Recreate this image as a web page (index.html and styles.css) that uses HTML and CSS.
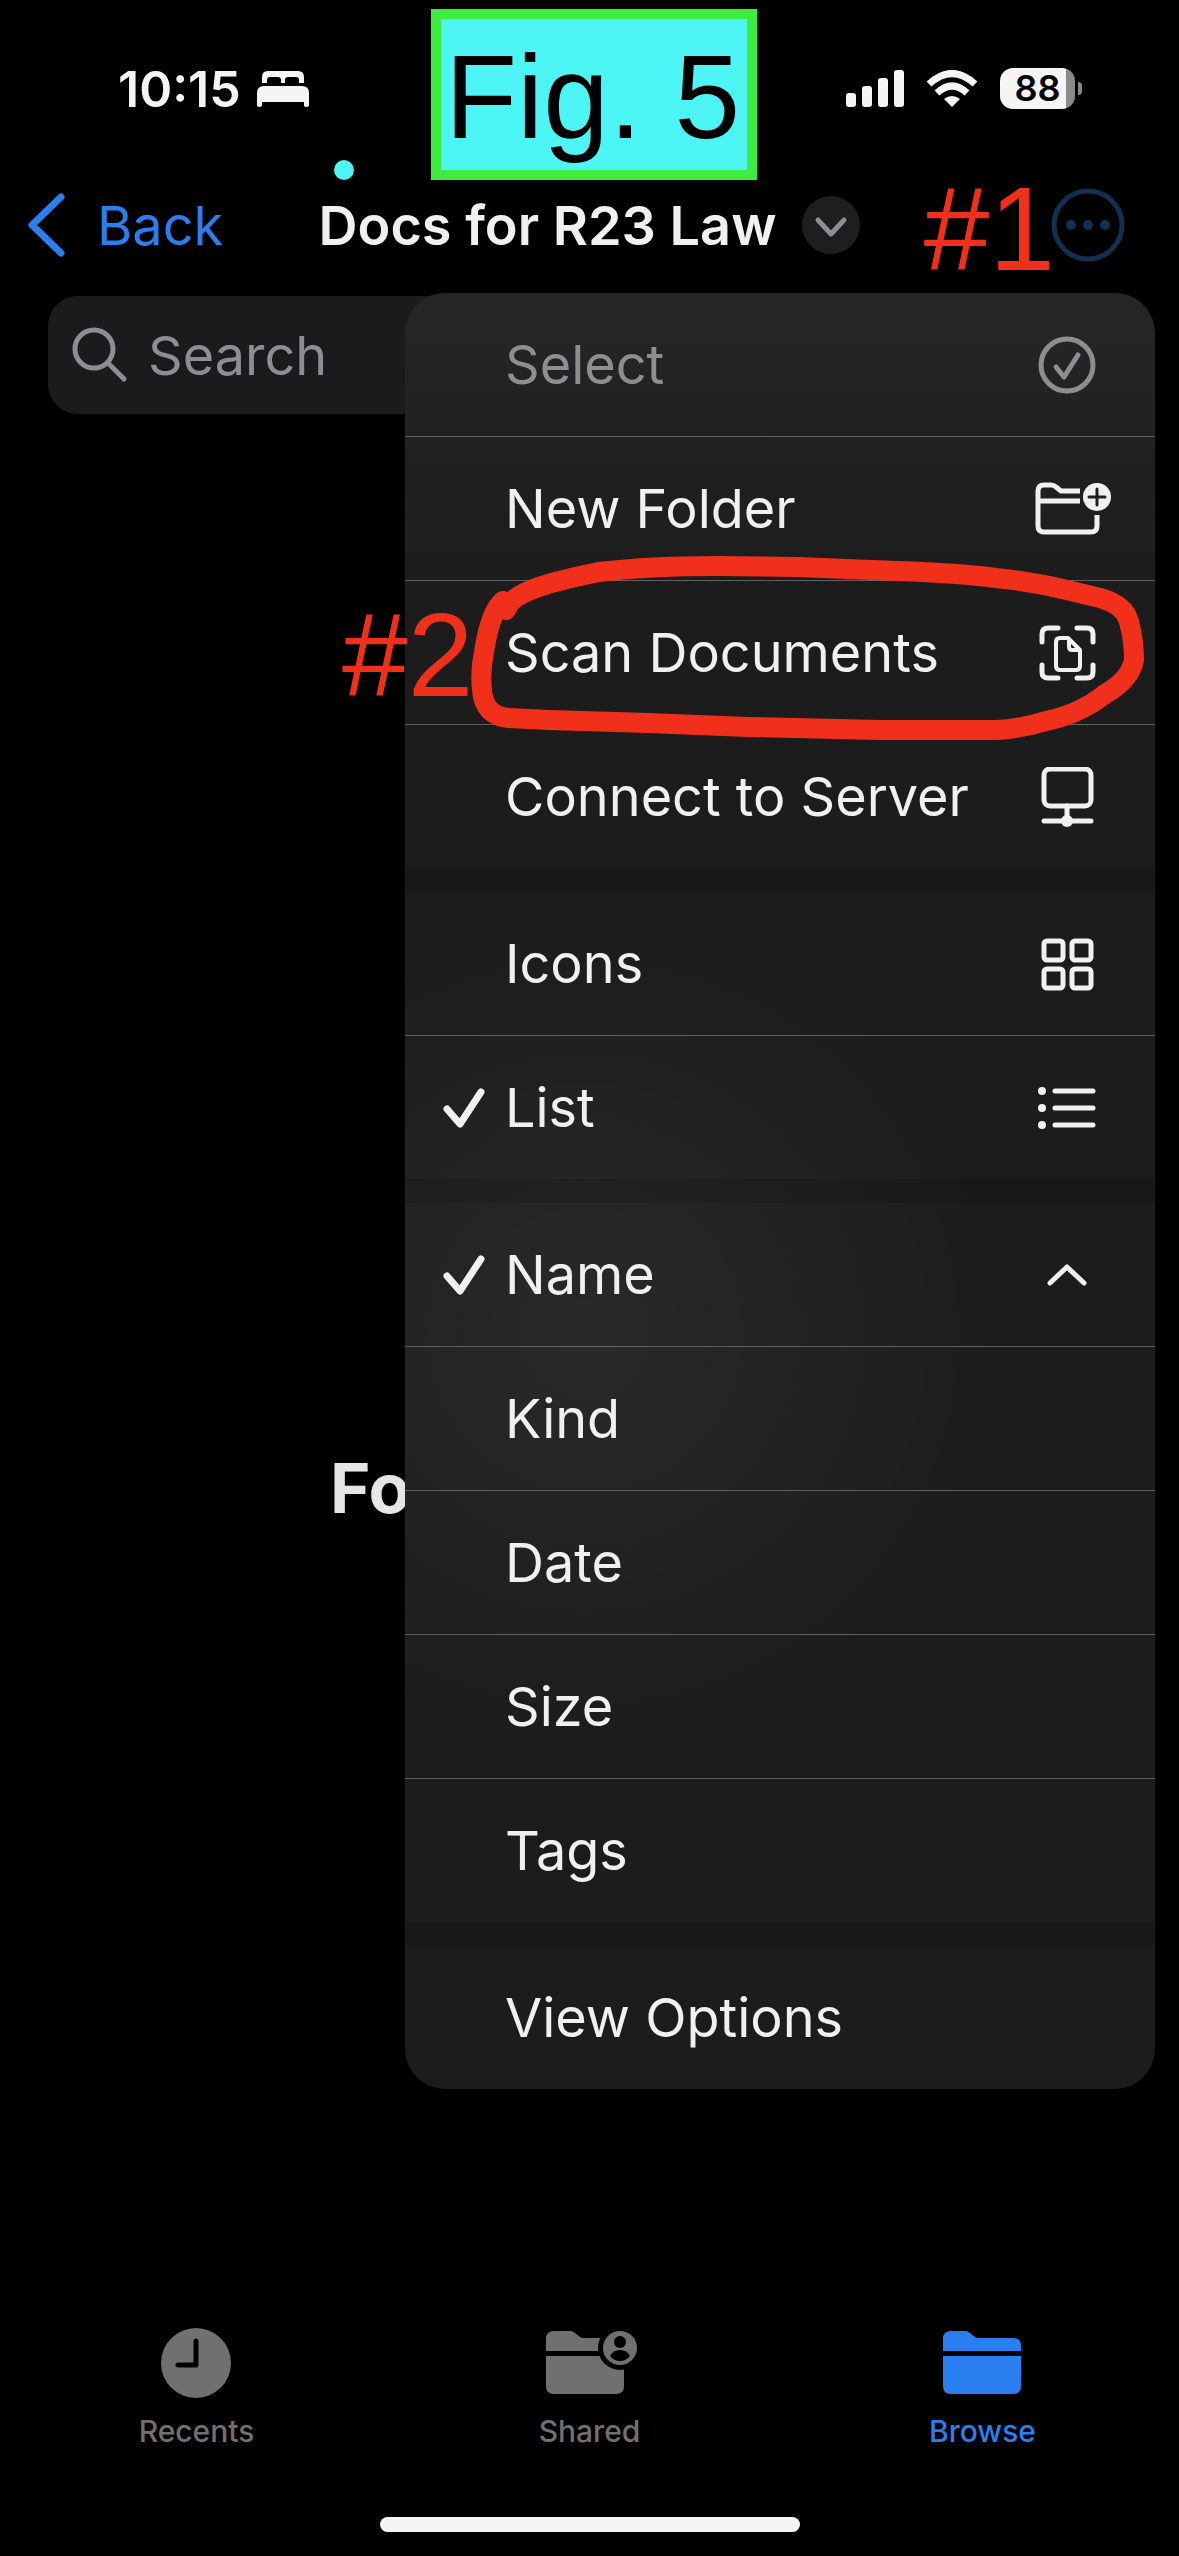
FILE: index.html
```html
<!DOCTYPE html>
<html lang="en">
<head>
    <meta charset="UTF-8">
    <meta name="viewport" content="width=device-width, initial-scale=1.0">
    <title>Docs for R23 Law</title>
    <link rel="stylesheet" href="styles.css">
</head>
<body>
    <header class="status-bar">
        <div class="status-left">
            <span>10:15</span>
            <svg width="52" height="36" viewBox="0 0 52 36" fill="currentColor">
                <path d="M5 12V6q0-6 6-6h30q6 0 6 6v6h-5V9q0-3-3-3H31q-3 0-3 3v3h-4V9q0-3-3-3h-8q-3 0-3 3v3z"/>
                <path d="M0 35V22q0-7 7-7h38q7 0 7 7v13q-3 2-5 0v-4H5v4q-3 2-5 0z"/>
            </svg>
        </div>
        <div class="status-right">
            <svg width="58" height="38" viewBox="0 0 58 38" fill="currentColor">
                <rect x="0" y="23" width="10" height="14" rx="3"/>
                <rect x="16" y="16" width="10" height="21" rx="3"/>
                <rect x="32" y="8" width="10" height="29" rx="3"/>
                <rect x="48" y="0" width="10" height="37" rx="3"/>
            </svg>
            <svg width="52" height="38" viewBox="0 0 52 38" fill="none" stroke="currentColor" stroke-width="7">
                <path d="M3 14Q26-7 49 14"/>
                <path d="M11 23Q26 9 41 23"/>
                <path d="M26 37l-8-8q8-6 16 0z" fill="currentColor" stroke="none"/>
            </svg>
            <div class="battery"><span>88</span></div>
        </div>
        <div class="figure-label">Fig. 5</div>
        <span class="dot"></span>
    </header>

    <nav class="nav-bar">
        <a href="#" class="back">
            <svg width="40" height="64" viewBox="0 0 40 64"><path d="M34 4L5 32l29 28"/></svg>
            Back
        </a>
        <button type="button" class="title">
            Docs for R23 Law
            <svg width="58" height="58" viewBox="0 0 58 58">
                <circle cx="29" cy="29" r="29"/>
                <path d="M16 24l13 14 13-14"/>
            </svg>
        </button>
        <button type="button" class="more" aria-label="More">
            <svg width="74" height="74" viewBox="0 0 74 74">
                <circle cx="37" cy="37" r="34" fill="none" stroke="currentColor" stroke-width="5"/>
                <g fill="currentColor">
                    <circle cx="20" cy="37" r="5"/>
                    <circle cx="37" cy="37" r="5"/>
                    <circle cx="54" cy="37" r="5"/>
                </g>
            </svg>
        </button>
        <span class="note note-1">#1</span>
    </nav>

    <main>
        <label class="search">
            <svg width="56" height="56" viewBox="0 0 56 56">
                <circle cx="22" cy="22" r="19"/>
                <path d="M36 36l16 16"/>
            </svg>
            <input type="search" placeholder="Search" aria-label="Search">
        </label>

        <h1 class="empty">Folder is Empty</h1>

        <div class="menu">
            <div class="menu-section">
                <button type="button" class="item" disabled>
                    <span class="check"></span>
                    <span class="name">Select</span>
                    <svg class="icon" viewBox="0 0 90 60">
                        <circle cx="45" cy="30" r="26"/>
                        <path d="M34 32l8 10 14-22"/>
                    </svg>
                </button>
                <button type="button" class="item">
                    <span class="check"></span>
                    <span class="name">New Folder</span>
                    <svg class="icon" viewBox="0 0 90 60">
                        <path d="M58 12H39l-5-4q-2-2-5-2h-7q-6 0-6 6v35q0 6 6 6h47q6 0 6-6V36M16 22h42" stroke-linecap="butt"/>
                        <circle cx="75" cy="18" r="14" fill="currentColor" stroke="none"/>
                        <path d="M67 18h16M75 10v16" stroke="#1f1f20" stroke-width="3"/>
                    </svg>
                </button>
                <button type="button" class="item">
                    <span class="check"></span>
                    <span class="name">Scan Documents</span>
                    <svg class="icon" viewBox="0 0 90 60">
                        <path d="M20 19v-8q0-6 6-6h10M55 5h10q6 0 6 6v8M71 42v7q0 6-6 6H55M36 55H26q-6 0-6-6v-7"/>
                        <path d="M38 15h8l12 12v16q0 4-4 4H38q-4 0-4-4V19q0-4 4-4zM47 16v8q0 3 3 3h8" stroke-width="4"/>
                    </svg>
                    <svg class="scribble" width="680" height="190" viewBox="470 550 680 190">
                        <path d="M506 610C512 590 560 580 599 572Q650 566 718 566L797 567 897 571Q960 573 996 578Q1035 582 1071 591L1100 598Q1125 605 1129 622Q1134 640 1134 660Q1130 680 1105 694Q1080 714 1046 721Q1020 729 996 730H880L748 727 648 723 549 720 509 718Q484 716 482 690Q480 670 484 652Q490 612 503 601"/>
                    </svg>
                    <span class="note note-2">#2</span>
                </button>
                <button type="button" class="item">
                    <span class="check"></span>
                    <span class="name">Connect to Server</span>
                    <svg class="icon" viewBox="0 0 90 60">
                        <rect x="22" y="2" width="47" height="37" rx="6"/>
                        <path d="M45 39v14M22 54h47"/>
                        <circle cx="45" cy="54" r="6" fill="currentColor" stroke="none"/>
                    </svg>
                </button>
            </div>

            <div class="menu-section">
                <button type="button" class="item">
                    <span class="check"></span>
                    <span class="name">Icons</span>
                    <svg class="icon" viewBox="0 0 90 60">
                        <rect x="22" y="7" width="19" height="19" rx="3"/>
                        <rect x="50" y="7" width="19" height="19" rx="3"/>
                        <rect x="22" y="35" width="19" height="19" rx="3"/>
                        <rect x="50" y="35" width="19" height="19" rx="3"/>
                    </svg>
                </button>
                <button type="button" class="item">
                    <span class="check">
                        <svg width="42" height="40" viewBox="0 0 42 40"><path d="M4 21l13 15L38 4"/></svg>
                    </span>
                    <span class="name">List</span>
                    <svg class="icon" viewBox="0 0 90 60">
                        <path d="M33 13h38M33 30h38M33 47h38"/>
                        <g fill="currentColor" stroke="none">
                            <circle cx="20" cy="13" r="4"/>
                            <circle cx="20" cy="30" r="4"/>
                            <circle cx="20" cy="47" r="4"/>
                        </g>
                    </svg>
                </button>
            </div>

            <div class="menu-section">
                <button type="button" class="item">
                    <span class="check">
                        <svg width="42" height="40" viewBox="0 0 42 40"><path d="M4 21l13 15L38 4"/></svg>
                    </span>
                    <span class="name">Name</span>
                    <svg class="icon" viewBox="0 0 90 60"><path d="M28 38l17-16 17 16"/></svg>
                </button>
                <button type="button" class="item"><span class="check"></span><span class="name">Kind</span></button>
                <button type="button" class="item"><span class="check"></span><span class="name">Date</span></button>
                <button type="button" class="item"><span class="check"></span><span class="name">Size</span></button>
                <button type="button" class="item"><span class="check"></span><span class="name">Tags</span></button>
            </div>

            <div class="menu-section">
                <button type="button" class="item"><span class="check"></span><span class="name">View Options</span></button>
            </div>
        </div>
    </main>

    <footer>
        <nav class="tabs">
            <a href="#" class="tab">
                <svg width="96" height="72" viewBox="0 0 96 72">
                    <circle cx="47" cy="36" r="35" fill="currentColor"/>
                    <path d="M47 14v24H29" fill="none" stroke="#000" stroke-width="5" stroke-linecap="round" stroke-linejoin="round"/>
                </svg>
                Recents
            </a>
            <a href="#" class="tab">
                <svg width="96" height="72" viewBox="0 0 96 72">
                    <path d="M4 24V12q0-8 8-8h16q3 0 5 2l5 4q1 1 4 1h32q8 0 8 8v5zM4 29h78v30q0 8-8 8H12q-8 0-8-8z" fill="currentColor"/>
                    <circle cx="78" cy="21" r="22" fill="#000"/>
                    <circle cx="78" cy="21" r="17" fill="currentColor"/>
                    <circle cx="78" cy="15" r="6" fill="#000"/>
                    <path d="M68 29q3-6 10-6t10 6q-4 5-10 5t-10-5z" fill="#000"/>
                </svg>
                Shared
            </a>
            <a href="#" class="tab active">
                <svg width="96" height="72" viewBox="0 0 96 72">
                    <path d="M8 24V12q0-8 8-8h14q3 0 5 2l5 4q1 1 4 1h34q8 0 8 8v5zM8 29h78v30q0 8-8 8H16q-8 0-8-8z" fill="currentColor"/>
                </svg>
                Browse
            </a>
        </nav>
        <div class="home-indicator"></div>
    </footer>
</body>
</html>
```
FILE: styles.css
```css
:root {
    --blue: #2a7ff0;
    --red: #f0301b;
    --text: #f0f0f0;
    --muted: #8e8e92;
    --tab-gray: #707070;
}

* {
    box-sizing: border-box;
}

body {
    margin: 0;
    min-height: 100vh;
    display: flex;
    flex-direction: column;
    background: #000;
    color: var(--text);
    font-family: Inter, "Liberation Sans", sans-serif;
    font-size: 54px;
}

button, input {
    font: inherit;
    color: inherit;
    background: none;
    border: none;
    padding: 0;
}

a {
    color: inherit;
    text-decoration: none;
}

svg {
    display: block;
    flex: none;
}

/* status bar */
.status-bar {
    position: relative;
    height: 177px;
    padding: 0 97px 0 118px;
    display: flex;
    align-items: center;
    justify-content: space-between;
    color: #f5f5f5;
}

.status-left {
    display: flex;
    align-items: center;
    gap: 16px;
    font-size: 50px;
    font-weight: 600;
}

.status-right {
    display: flex;
    align-items: center;
    gap: 22px;
}

.battery {
    position: relative;
    width: 75px;
    height: 41px;
    margin-right: 7px;
    border-radius: 13px;
    background: linear-gradient(to right, #f5f5f5 88%, #8a8a8a 88%);
    color: #000;
    font-size: 36px;
    font-weight: 600;
    line-height: 41px;
    text-align: center;
}

.battery::after {
    content: "";
    position: absolute;
    left: 78px;
    top: 14px;
    width: 4px;
    height: 13px;
    border-radius: 0 4px 4px 0;
    background: #8a8a8a;
}

.figure-label {
    position: absolute;
    left: 431px;
    top: 9px;
    border: 10px solid #3dec3d;
    padding: 6px 7px 0 4px;
    background: #4df4f4;
    color: #000;
    font: 118px/145px "Liberation Sans", sans-serif;
    white-space: nowrap;
}

.dot {
    position: absolute;
    left: 334px;
    top: 160px;
    width: 20px;
    height: 20px;
    border-radius: 50%;
    background: #4df4f4;
}

/* handwritten and typed marks laid over the screen */
.note {
    position: absolute;
    color: var(--red);
    font: 118px/118px "Liberation Sans", sans-serif;
}

.note-1 {
    right: 124px;
    top: -7px;
}

.note-2 {
    left: -63px;
    top: 15px;
}

.scribble {
    position: absolute;
    left: 65px;
    top: -31px;
    fill: none;
    stroke: var(--red);
    stroke-width: 20;
    stroke-linecap: round;
    stroke-linejoin: round;
}

/* navigation */
.nav-bar {
    position: relative;
    height: 96px;
    padding: 0 54px;
    display: grid;
    grid-template-columns: 1fr auto 1fr;
    align-items: center;
}

.back {
    display: flex;
    align-items: center;
    gap: 30px;
    margin-left: -27px;
    color: var(--blue);
}

.back svg {
    fill: none;
    stroke: currentColor;
    stroke-width: 7;
    stroke-linecap: round;
    stroke-linejoin: round;
}

.title {
    display: flex;
    align-items: center;
    gap: 26px;
    font-weight: 600;
    white-space: nowrap;
}

.title circle {
    fill: #1d1e1f;
}

.title path {
    fill: none;
    stroke: var(--muted);
    stroke-width: 5;
    stroke-linecap: round;
    stroke-linejoin: round;
}

.more {
    justify-self: end;
    color: #12304f;
}

/* content */
main {
    position: relative;
    flex: 1;
}

.search {
    height: 118px;
    margin: 23px 48px 0;
    padding: 0 24px;
    display: flex;
    align-items: center;
    gap: 20px;
    border-radius: 30px;
    background: #1a1b1c;
    color: var(--muted);
}

.search svg {
    fill: none;
    stroke: currentColor;
    stroke-width: 5;
    stroke-linecap: round;
}

.search input {
    flex: 1;
    min-width: 0;
    outline: none;
}

.search input::placeholder {
    color: var(--muted);
}

.empty {
    margin: 1032px 0 0;
    font-size: 69px;
    line-height: 84px;
    font-weight: 700;
    text-align: center;
    color: #e6e6e6;
}

/* pull-down menu */
.menu {
    position: absolute;
    top: 20px;
    right: 24px;
    width: 750px;
    display: flex;
    flex-direction: column;
    gap: 24px;
    border-radius: 40px;
    background:
        radial-gradient(circle at 180px 1040px, rgba(255, 255, 255, 0.06), transparent 420px),
        linear-gradient(#222223, #181818 300px);
}

.menu-section {
    background: rgba(255, 255, 255, 0.02);
}

.menu-section:first-child {
    border-radius: 40px 40px 0 0;
}

.menu-section:last-child {
    border-radius: 0 0 40px 40px;
}

.item {
    position: relative;
    width: 100%;
    height: 144px;
    padding: 0 43px 0 38px;
    display: flex;
    align-items: center;
    text-align: left;
    border-bottom: 1px solid #606062;
}

.item:last-child {
    height: 143px;
    border-bottom: none;
}

.item:disabled {
    color: var(--muted);
}

.check {
    width: 62px;
}

.check svg {
    fill: none;
    stroke: currentColor;
    stroke-width: 7;
    stroke-linecap: round;
    stroke-linejoin: round;
}

.name {
    flex: 1;
    white-space: nowrap;
}

.icon {
    width: 90px;
    height: 60px;
    fill: none;
    stroke: currentColor;
    stroke-width: 5;
    stroke-linecap: round;
    stroke-linejoin: round;
}

/* bottom tabs */
.tabs {
    display: grid;
    grid-template-columns: repeat(3, 1fr);
}

.tab {
    display: flex;
    flex-direction: column;
    align-items: center;
    gap: 14px;
    color: var(--tab-gray);
    font-size: 30px;
    font-weight: 500;
    line-height: 36px;
}

.tab.active {
    color: var(--blue);
}

.home-indicator {
    width: 420px;
    height: 15px;
    margin: 68px auto 24px;
    border-radius: 8px;
    background: #f5f5f5;
}
```
